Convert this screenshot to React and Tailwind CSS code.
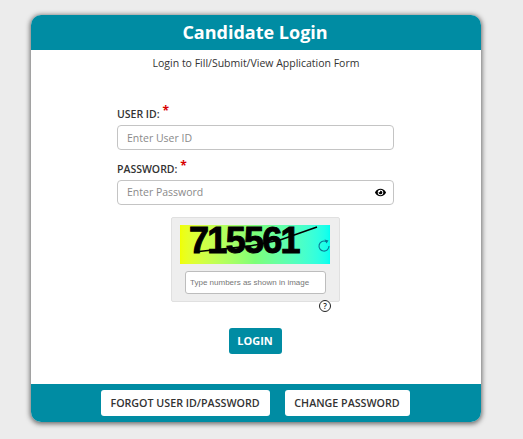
import React from "react";
import { FaEye } from "react-icons/fa";

function Label({ children }) {
  return (
    <label className="block h-[16px] overflow-visible text-[10.5px] leading-[16px] font-semibold text-[#333]">
      {children}: <span className="relative -top-[3px] text-[12px] leading-[12px] font-bold text-[#d80000]">*</span>
    </label>
  );
}

export default function App() {
  return (
    <div className="h-[439px] w-full overflow-hidden bg-[#ececec] pt-[15px] font-['Open_Sans',sans-serif]">
      <div className="ml-[31px] w-[450px] h-[407px] flex flex-col rounded-[10px] bg-white overflow-hidden shadow-[0_1px_5px_1px_rgba(0,0,0,0.55)]">
        {/* header */}
        <div className="h-[35px] shrink-0 bg-[#008ca3] flex items-center justify-center pr-[2px] text-white text-[18px] font-bold">
          Candidate Login
        </div>

        {/* form */}
        <div className="flex-1 flex flex-col">
          <p className="mt-[5px] text-center text-[10.5px] leading-[16px] text-[#333]">
            Login to Fill/Submit/View Application Form
          </p>

          <div className="mt-[35px] mx-[86px] w-[277px]">
            <Label>USER ID</Label>
            <input
              placeholder="Enter User ID"
              className="block mt-[3px] w-full h-[25px] rounded-[4px] border border-[#c4c4c4] bg-white px-[9px] text-[10.5px] outline-none placeholder:text-[#8a8a8a]"
            />
            <div className="mt-[11px]">
              <Label>PASSWORD</Label>
            </div>
            <div className="mt-[3px] h-[25px] flex items-center rounded-[4px] border border-[#c4c4c4] bg-white px-[9px]">
              <input
                placeholder="Enter Password"
                className="flex-1 min-w-0 text-[10.5px] outline-none placeholder:text-[#8a8a8a]"
              />
              <FaEye className="-mr-[2px] text-[11px] text-black" />
            </div>
          </div>

          {/* captcha */}
          <div className="relative mt-[12px] ml-[140px] w-[169px] h-[85px] shrink-0 rounded-[2px] border border-[#e0e0e0] bg-[#eeeeee] px-[8px] pt-[7px]">
            <div className="relative h-[39px] w-[150px] bg-gradient-to-r from-[#f0ff00] via-[#7cff78] to-[#00fff0]">
              <span className="absolute left-[9px] -top-[2px] text-[36px] leading-[36px] font-bold tracking-[-1.7px] text-black [-webkit-text-stroke:1px_#000] font-['Liberation_Sans',sans-serif]">
                715561
              </span>
              <svg className="absolute inset-0" width="150" height="39" viewBox="0 0 150 39">
                <path d="M14 27 L70 21 L100 15 L137 2" fill="none" stroke="#000" strokeWidth="1.6" />
                <path d="M146 16.5 A5 5 0 1 0 149 21" fill="none" stroke="#0a7a95" strokeWidth="1.1" />
                <path d="M144.5 14.5 L148.5 15.5 L146.5 18.5 Z" fill="#0a7a95" />
              </svg>
            </div>
            <input
              placeholder="Type numbers as shown in image"
              className="block mt-[7px] ml-[5px] w-[141px] h-[23px] rounded-[3px] border border-[#bdbdbd] bg-white px-[4px] text-[8px] outline-none placeholder:text-[#777] font-['Liberation_Sans',sans-serif]"
            />
            <span className="absolute right-[8px] bottom-[-11px] flex h-[12px] w-[12px] items-center justify-center rounded-full border border-[#222] bg-white text-[8px] font-semibold leading-none text-[#222]">
              ?
            </span>
          </div>

          <div className="mt-[26px] pr-[2px] flex justify-center">
            <button className="h-[26px] w-[53px] rounded-[3px] bg-[#008ca3] text-[11px] font-bold text-white">
              LOGIN
            </button>
          </div>
        </div>

        {/* footer */}
        <div className="h-[38px] shrink-0 bg-[#008ca3] flex justify-center gap-[15px] pr-[2px] pt-[6px] pb-[6px]">
          <button className="h-[26px] w-[169px] rounded-[3px] bg-white text-[10.7px] font-semibold text-[#333]">
            FORGOT USER ID/PASSWORD
          </button>
          <button className="h-[26px] w-[125px] rounded-[3px] bg-white text-[10.7px] font-semibold text-[#333]">
            CHANGE PASSWORD
          </button>
        </div>
      </div>
    </div>
  );
}
